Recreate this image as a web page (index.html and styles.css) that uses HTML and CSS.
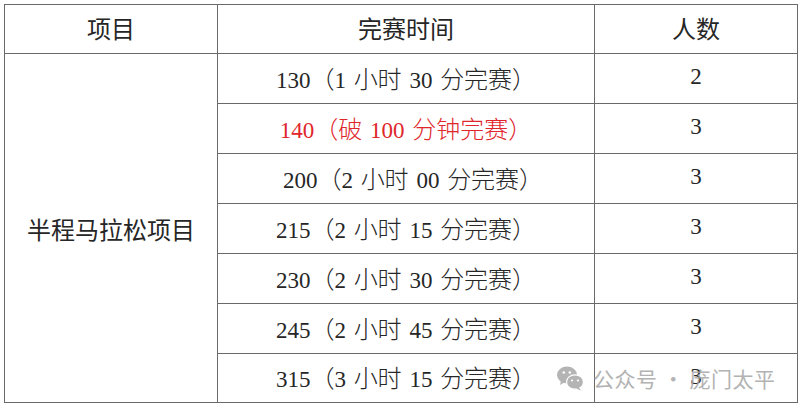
FILE: index.html
```html
<!DOCTYPE html>
<html lang="zh">
<head>
<meta charset="utf-8">
<link rel="stylesheet" href="styles.css">
</head>
<body>
<div class="page">
  <table class="tbl">
    <colgroup>
      <col class="c1"><col class="c2"><col class="c3">
    </colgroup>
    <thead>
      <tr class="head"><th class="h">项目</th><th class="h">完赛时间</th><th class="h">人数</th></tr>
    </thead>
    <tbody>
      <tr><td rowspan="7" class="proj h">半程马拉松项目</td><td>130<span class="h">（</span>1 <span class="h">小时</span> 30 <span class="h">分完赛）</span></td><td>2</td></tr>
      <tr><td class="red">140<span class="h">（破</span> 100 <span class="h">分钟完赛）</span></td><td>3</td></tr>
      <tr><td class="shift">200<span class="h">（</span>2 <span class="h">小时</span> 00 <span class="h">分完赛）</span></td><td>3</td></tr>
      <tr><td>215<span class="h">（</span>2 <span class="h">小时</span> 15 <span class="h">分完赛）</span></td><td>3</td></tr>
      <tr><td>230<span class="h">（</span>2 <span class="h">小时</span> 30 <span class="h">分完赛）</span></td><td>3</td></tr>
      <tr><td>245<span class="h">（</span>2 <span class="h">小时</span> 45 <span class="h">分完赛）</span></td><td>3</td></tr>
      <tr class="last"><td>315<span class="h">（</span>3 <span class="h">小时</span> 15 <span class="h">分完赛）</span></td><td>3</td></tr>
    </tbody>
  </table>
  <div class="watermark">
    <svg class="wx" width="27" height="26" viewBox="0 0 27 26">
      <ellipse cx="10" cy="10" rx="10" ry="8.5" fill="#a8a8a8"/>
      <path d="M4 16 L3 20 L8 17 Z" fill="#a8a8a8"/>
      <ellipse cx="18" cy="17" rx="8.5" ry="7.2" fill="#a8a8a8" stroke="#fff" stroke-width="1.2"/>
      <path d="M22 22.5 L24 25.5 L19 23.5 Z" fill="#a8a8a8"/>
      <circle cx="6.8" cy="7.5" r="1.3" fill="#fff"/>
      <circle cx="12.8" cy="7.5" r="1.3" fill="#fff"/>
      <circle cx="15" cy="15.5" r="1.1" fill="#fff"/>
      <circle cx="21" cy="15.5" r="1.1" fill="#fff"/>
    </svg>
    <span class="wm-text">公众号 · 庞门太平</span>
  </div>
</div>
</body>
</html>
```

FILE: styles.css
```css
html, body {
  margin: 0;
  padding: 0;
  background: #fff;
}
.page {
  position: relative;
  width: 800px;
  height: 409px;
  padding: 4px 0 0 4px;
  box-sizing: border-box;
}
.tbl {
  border-collapse: collapse;
  table-layout: fixed;
  width: 793px;
  font-family: "Liberation Serif", "Noto Sans CJK SC", serif;
  font-size: 23px;
  color: #262626;
}
.c1 { width: 213px; }
.c2 { width: 377px; }
.c3 { width: 203px; }
.tbl th, .tbl td {
  border: 1px solid #6a6a6a;
  text-align: center;
  vertical-align: middle;
  padding: 0 0 3px 0;
  font-weight: normal;
  height: 50px;
  box-sizing: border-box;
  white-space: nowrap;
  word-spacing: 2px;
}
.tbl tr.head th { height: 49px; }
.tbl tr.last td { height: 49px; }
.tbl td.proj { padding-bottom: 0; }
.h {
  font-family: "Noto Sans CJK SC", sans-serif;
  font-size: 24px;
  font-weight: 300;
}
.tbl td.red { color: #e0262b; }
.tbl td.shift { padding-left: 14px; }
.watermark {
  position: absolute;
  left: 557px;
  top: 364px;
  display: flex;
  align-items: center;
  gap: 9px;
  opacity: 0.85;
}
.wm-text {
  font-family: "Noto Sans CJK SC", sans-serif;
  font-size: 21px;
  color: #a6a6a6;
  line-height: 28px;
  letter-spacing: 0.5px;
}
```
